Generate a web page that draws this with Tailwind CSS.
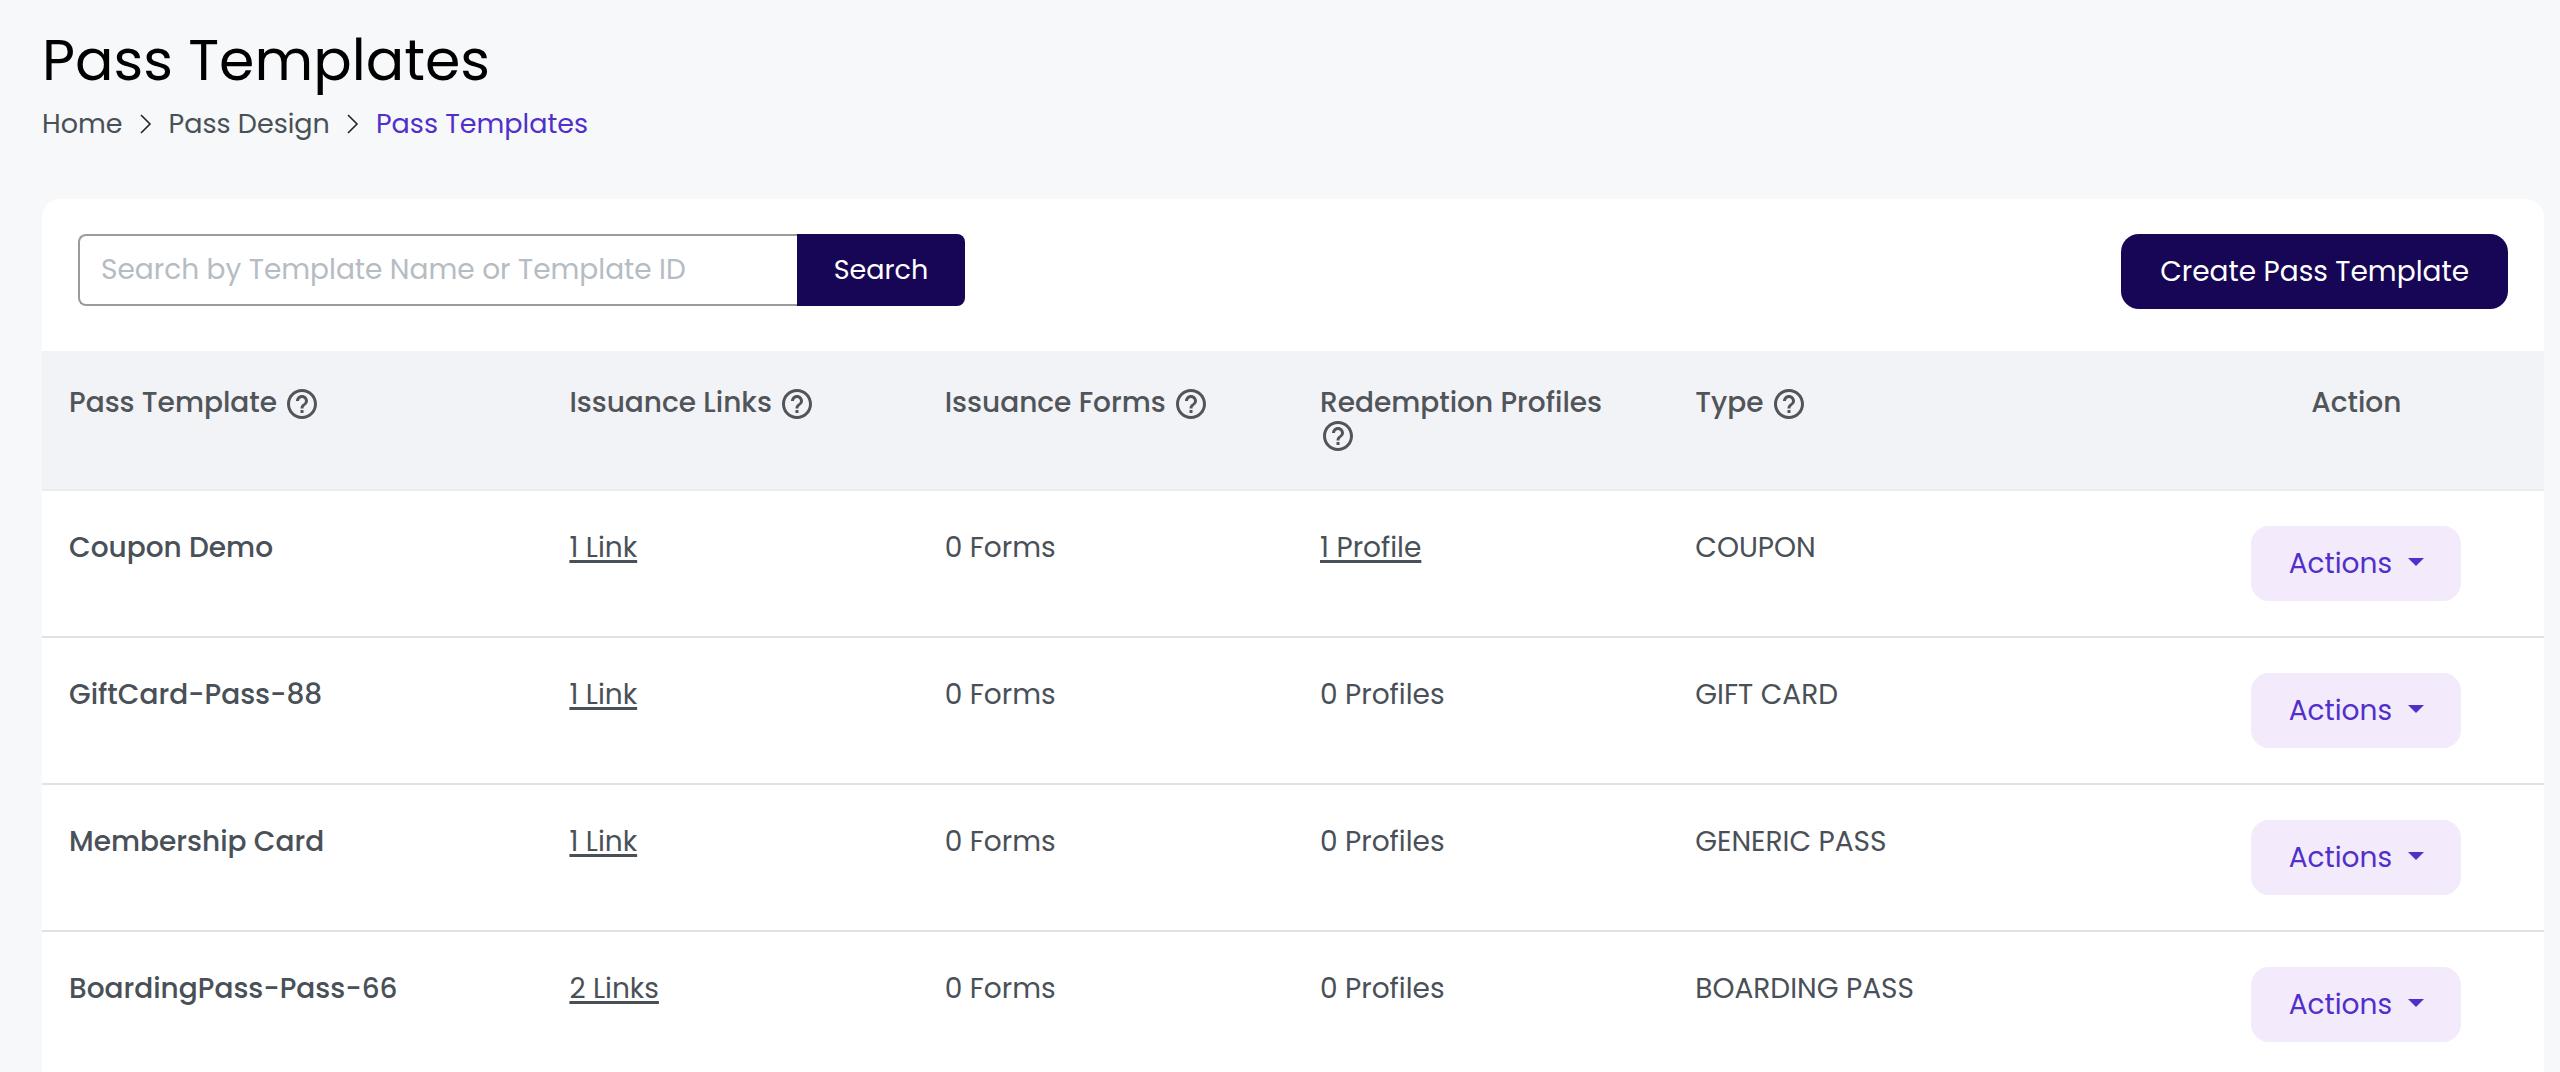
<!DOCTYPE html>
<html lang="en">
<head>
<meta charset="utf-8">
<meta name="viewport" content="width=device-width, initial-scale=1">
<title>Pass Templates</title>
<script src="https://cdn.jsdelivr.net/npm/@tailwindcss/browser@4"></script>
</head>
<body class="min-h-screen overflow-x-hidden bg-[#f7f8fa] font-[Poppins,Inter,sans-serif] text-[28px] text-[#495057]">
<svg class="hidden">
  <symbol id="help" viewBox="0 0 24 24">
    <path fill="currentColor" d="M11 18h2v-2h-2v2zm1-16C6.48 2 2 6.48 2 12s4.48 10 10 10 10-4.480 10-10S17.520 2 12 2zm0 18c-4.410 0-8-3.590-8-8s3.590-8 8-8 8 3.590 8 8-3.590 8-8 8zm0-14c-2.210 0-4 1.790-4 4h2c0-1.100.9-2 2-2s2 .9 2 2c0 2-3 1.750-3 5h2c0-2.250 3-2.500 3-5 0-2.210-1.790-4-4-4z"/>
  </symbol>
  <symbol id="chevron" viewBox="0 0 12 20">
    <path fill="none" stroke="currentColor" stroke-width="1.600" d="M1 1l9 9-9 9"/>
  </symbol>
  <symbol id="caret" viewBox="0 0 16 8">
    <path fill="currentColor" d="M0 0h16L8 8z"/>
  </symbol>
</svg>
<main class="pt-6 pr-4 pl-[42px]">
  <h1 class="text-[57px] leading-[72px] text-black">Pass Templates</h1>
  <nav aria-label="Breadcrumb" class="mt-2">
    <ol class="flex items-center gap-[17px] text-[27px] leading-10">
      <li><a href="#">Home</a></li>
      <li aria-hidden="true"><svg class="h-5 w-3 text-[#212529]"><use href="#chevron"/></svg></li>
      <li><a href="#">Pass Design</a></li>
      <li aria-hidden="true"><svg class="h-5 w-3 text-[#212529]"><use href="#chevron"/></svg></li>
      <li><a href="#" aria-current="page" class="text-[#5130ca]">Pass Templates</a></li>
    </ol>
  </nav>

  <section class="mt-[55px] overflow-hidden rounded-t-[18px] bg-white">
    <div class="flex items-start justify-between px-9 pt-[35px] pb-[42px]">
      <form class="flex h-[72px]" onsubmit="return false">
        <input type="search" aria-label="Search templates" placeholder="Search by Template Name or Template ID" class="w-[719px] rounded-l-lg border-2 border-r-0 border-[#999b9e] px-[21px] outline-none placeholder:text-[#b5bcc3]">
        <button type="submit" class="w-[168px] rounded-r-lg bg-[#170655] text-[27px] text-white">Search</button>
      </form>
      <button type="button" class="h-[75px] rounded-[18px] bg-[#170655] px-[39px] text-white">Create Pass Template</button>
    </div>

    <table class="w-full table-fixed text-left">
      <thead class="bg-[#f2f3f7] text-[#50555a]">
        <tr class="h-[139px] border-b-2 border-[#ebecef] align-top leading-8">
          <th scope="col" class="w-1/5 px-[27px] pt-9 font-medium">Pass Template <svg class="-my-1 inline size-9 align-[-6px]" role="img" aria-label="Help"><use href="#help"/></svg></th>
          <th scope="col" class="w-[15%] px-[27px] pt-9 font-medium">Issuance Links <svg class="-my-1 inline size-9 align-[-6px]" role="img" aria-label="Help"><use href="#help"/></svg></th>
          <th scope="col" class="w-[15%] px-[27px] pt-9 font-medium">Issuance Forms <svg class="-my-1 inline size-9 align-[-6px]" role="img" aria-label="Help"><use href="#help"/></svg></th>
          <th scope="col" class="w-[15%] px-[27px] pt-9 font-medium">Redemption Profiles <svg class="-my-1 inline size-9 align-[-6px]" role="img" aria-label="Help"><use href="#help"/></svg></th>
          <th scope="col" class="w-1/5 px-[27px] pt-9 font-medium">Type <svg class="-my-1 inline size-9 align-[-6px]" role="img" aria-label="Help"><use href="#help"/></svg></th>
          <th scope="col" class="w-[15%] px-[27px] pt-9 text-center font-medium">Action</th>
        </tr>
      </thead>
      <tbody id="rows"></tbody>
    </table>
  </section>
</main>
<script>
  const templates = [
    ["Coupon Demo", 1, 0, 1, "COUPON"],
    ["GiftCard-Pass-88", 1, 0, 0, "GIFT CARD"],
    ["Membership Card", 1, 0, 0, "GENERIC PASS"],
    ["BoardingPass-Pass-66", 2, 0, 0, "BOARDING PASS"],
  ];
  const count = (n, noun) => {
    const label = `${n} ${noun}${n === 1 ? "" : "s"}`;
    return n ? `<a href="#" class="underline decoration-[3px] underline-offset-[3px]">${label}</a>` : label;
  };
  document.getElementById("rows").innerHTML = templates.map(([name, links, forms, profiles, type]) => `
    <tr class="border-b-2 border-[#e1e2e7] align-top leading-10">
      <th scope="row" class="px-[27px] pt-[37px] font-medium">${name}</th>
      <td class="px-[27px] pt-[37px]">${count(links, "Link")}</td>
      <td class="px-[27px] pt-[37px]">${count(forms, "Form")}</td>
      <td class="px-[27px] pt-[37px]">${count(profiles, "Profile")}</td>
      <td class="px-[27px] pt-[37px]">${type}</td>
      <td class="px-[27px] py-[35px]">
        <button type="button" aria-haspopup="menu" class="mx-auto flex h-[75px] w-[210px] items-center justify-center gap-4 rounded-[18px] bg-[#f3eafc] text-[#5130ca]">Actions <svg class="mb-1 h-2 w-4"><use href="#caret"/></svg></button>
      </td>
    </tr>`).join("");
</script>
</body>
</html>
